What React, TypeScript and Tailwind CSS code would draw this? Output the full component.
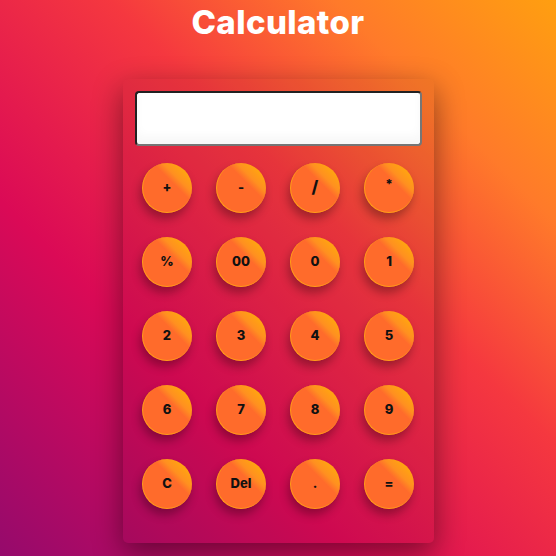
const KEYS = ["+", "-", "/", "*", "%", "00", "0", "1", "2", "3", "4", "5", "6", "7", "8", "9", "C", "Del", ".", "="];

export default function App() {
  return (
    <div className="flex h-[556px] w-[556px] flex-col items-center overflow-hidden bg-[linear-gradient(45deg,#950a6c_0%,#db0a56_32%,#f5383f_60%,#ff7a2a_80%,#ff9f10_100%)] font-['Inter',sans-serif]">
      <h1 className="mt-[3px] text-[33px] leading-[38px] font-extrabold tracking-[0.4px] text-white">Calculator</h1>
      <div className="mt-[38px] rounded-[5px] bg-black/[0.06] px-[12px] pt-[12px] pb-[34px] shadow-[0_10px_30px_rgba(0,0,0,0.45)]">
        <div className="h-[55px] w-[287px] rounded-[4px] border-2 border-[#767676] bg-white shadow-[inset_0_-8px_10px_rgba(0,0,0,0.03)] [border-style:inset]" />
        <div className="mt-[17px] ml-[7px] grid grid-cols-[repeat(4,50px)] gap-[24px]">
          {KEYS.map((k) => (
            <button
              key={k}
              type="button"
              className="flex h-[50px] w-[50px] items-center justify-center rounded-full border-b border-l border-[#ffa015] bg-[linear-gradient(45deg,#ff6b2b_60%,#ff9020_70%,#ffb800_100%)] text-[13px] font-extrabold text-[#111] shadow-[-2px_6px_10px_rgba(0,0,0,0.3)]"
            >
              <span className={k === "/" ? "text-[17px]" : k === "*" ? "-mt-[6px]" : ""}>{k}</span>
            </button>
          ))}
        </div>
      </div>
    </div>
  );
}
